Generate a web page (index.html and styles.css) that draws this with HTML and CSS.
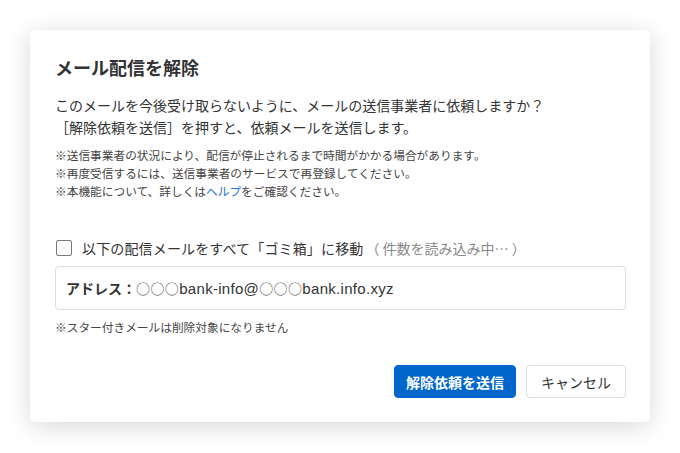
FILE: index.html
```html
<!DOCTYPE html>
<html lang="ja">
<head>
<meta charset="utf-8">
<title>メール配信を解除</title>
<link rel="stylesheet" href="styles.css">
</head>
<body>
<div class="dialog">
  <h1 class="title">メール配信を解除</h1>
  <p class="lead">このメールを今後受け取らないように、メールの送信事業者に依頼しますか？<br>［解除依頼を送信］を押すと、依頼メールを送信します。</p>
  <ul class="notes">
    <li>※送信事業者の状況により、配信が停止されるまで時間がかかる場合があります。</li>
    <li>※再度受信するには、送信事業者のサービスで再登録してください。</li>
    <li>※本機能について、詳しくは<a class="link" href="#">ヘルプ</a>をご確認ください。</li>
  </ul>
  <label class="check-row">
    <span class="checkbox"></span>
    <span class="check-label">以下の配信メールをすべて「ゴミ箱」に移動</span>
    <span class="count">（ 件数を読み込み中… ）</span>
  </label>
  <div class="address">
    <span class="address-text"><span class="address-label">アドレス：</span><span class="circles">○○○</span><span class="latin">bank-info@</span><span class="circles">○○○</span><span class="latin">bank.info.xyz</span></span>
  </div>
  <p class="star-note">※スター付きメールは削除対象になりません</p>
  <div class="actions">
    <button class="btn btn-primary" type="button">解除依頼を送信</button>
    <button class="btn btn-secondary" type="button">キャンセル</button>
  </div>
</div>
</body>
</html>
```

FILE: styles.css
```css
* {
  box-sizing: border-box;
}

html, body {
  margin: 0;
  padding: 0;
  background: #ffffff;
}

body {
  padding: 30px;
  font-family: "Noto Sans CJK JP", sans-serif;
  color: #333333;
}

.dialog {
  width: 620px;
  background: #ffffff;
  border-radius: 4px;
  box-shadow: 0 4px 24px rgba(0, 0, 0, 0.16);
  padding: 25px 24px 24px 25px;
}

.title {
  margin: 0;
  font-size: 18px;
  line-height: 24px;
  font-weight: bold;
  color: #333333;
}

.lead {
  margin: 15px 0 0;
  font-size: 14px;
  line-height: 22px;
}

.notes {
  list-style: none;
  margin: 8px 0 0;
  padding: 0;
  font-size: 11.7px;
  line-height: 18px;
  color: #444444;
}

.link {
  color: #1a6fd6;
  text-decoration: none;
}

.check-row {
  display: flex;
  align-items: center;
  margin-top: 37px;
  height: 22px;
  font-size: 14px;
  line-height: 22px;
}

.checkbox {
  width: 16px;
  height: 16px;
  border: 1.5px solid #777777;
  border-radius: 2px;
  margin-left: 1px;
  margin-right: 10px;
  flex: none;
}

.check-label {
  letter-spacing: 0.15px;
}

.count {
  color: #888888;
  margin-left: 2px;
}

.address {
  margin-top: 7px;
  height: 44px;
  border: 1px solid #dddddd;
  border-radius: 4px;
  padding: 0 10px;
  display: flex;
  align-items: center;
  font-size: 14px;
}

.address-text {
  white-space: nowrap;
}

.address-label {
  font-weight: bold;
}

.circles {
  color: #555555;
  letter-spacing: 0.4px;
}

.latin {
  font-family: "Liberation Sans", sans-serif;
  font-size: 15px;
  letter-spacing: 0.3px;
}

.star-note {
  margin: 8px 0 0;
  font-size: 11.7px;
  line-height: 18px;
  color: #444444;
}

.actions {
  display: flex;
  justify-content: flex-end;
  gap: 10px;
  margin-top: 29px;
}

.btn {
  height: 33px;
  border-radius: 4px;
  font-family: "Noto Sans CJK JP", sans-serif;
  font-size: 14px;
  padding: 0;
  cursor: pointer;
}

.btn-primary {
  width: 122px;
  background: #0066cc;
  border: 1px solid #0066cc;
  color: #ffffff;
  font-weight: bold;
}

.btn-secondary {
  width: 100px;
  background: #ffffff;
  border: 1px solid #dddddd;
  color: #333333;
}
```
